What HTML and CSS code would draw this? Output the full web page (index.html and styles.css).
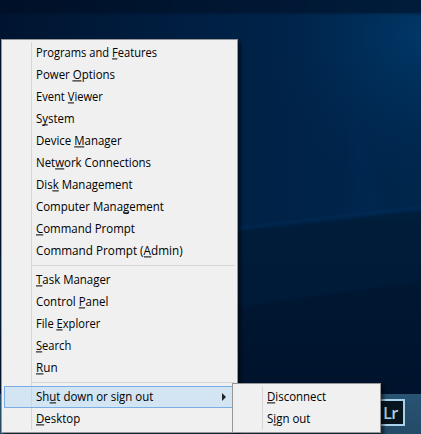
FILE: index.html
```html
<!DOCTYPE html>
<html lang="en">
<head>
<meta charset="utf-8">
<title>Desktop</title>
<link rel="stylesheet" href="styles.css">
</head>
<body>
<main class="desktop">
  <svg class="wallpaper" viewBox="0 0 421 434" aria-hidden="true">
    <defs>
      <linearGradient id="top" x1="0" x2="1" y1="0" y2="0"><stop offset="0" stop-color="#001027"/><stop offset=".6" stop-color="#001733"/><stop offset="1" stop-color="#001d3b"/></linearGradient>
      <linearGradient id="base" x1="0" x2="1" y1="0" y2="0"><stop offset="0" stop-color="#001430"/><stop offset=".55" stop-color="#002146"/><stop offset="1" stop-color="#00264c"/></linearGradient>
      <radialGradient id="glow" gradientUnits="userSpaceOnUse" cx="421" cy="35" r="165"><stop offset="0" stop-color="#003767"/><stop offset=".45" stop-color="#002e5a" stop-opacity=".7"/><stop offset="1" stop-color="#00264c" stop-opacity="0"/></radialGradient>
      <linearGradient id="low" x1="0" x2="0" y1="0" y2="1"><stop offset="0" stop-color="#001d3a"/><stop offset="1" stop-color="#001834"/></linearGradient>
      <linearGradient id="deep" x1="0" x2="0" y1="0" y2="1"><stop offset="0" stop-color="#001833"/><stop offset="1" stop-color="#00102a"/></linearGradient>
      <filter id="soft" color-interpolation-filters="sRGB"><feGaussianBlur stdDeviation=".8"/></filter>
      <filter id="softer" color-interpolation-filters="sRGB" x="-50%" y="-20%" width="200%" height="140%"><feGaussianBlur stdDeviation="5"/></filter>
    </defs>
    <rect width="421" height="434" fill="url(#base)"/>
    <rect y="13" width="421" height="210" fill="url(#glow)"/>
    <path d="M350 115L360 120L387 214L350 218Z" fill="#002c5a" opacity=".3" filter="url(#softer)"/>
    <path d="M230 229L421 207" stroke="#002d59" stroke-width="3" opacity=".5" filter="url(#soft)"/>
    <path d="M-5 -5H430V13.500H-5Z" fill="url(#top)" filter="url(#soft)"/>
    <path d="M-5 258L430 210V440H-5Z" fill="url(#low)" filter="url(#soft)"/>
    <path d="M-5 334L240 307L430 280V440H-5Z" fill="url(#deep)" filter="url(#soft)"/>
  </svg>
  <div class="taskbar"></div>
  <div class="lightroom">Lr</div>
  <nav class="menu main-menu">
    <div class="item narrow"><span>Programs and <u>F</u>eatures</span></div>
    <div class="item"><span>Power <u>O</u>ptions</span></div>
    <div class="item narrow"><span>Event <u>V</u>iewer</span></div>
    <div class="item"><span>S<u>y</u>stem</span></div>
    <div class="item"><span>Device <u>M</u>anager</span></div>
    <div class="item"><span>Net<u>w</u>ork Connections</span></div>
    <div class="item"><span>Dis<u>k</u> Management</span></div>
    <div class="item"><span>Computer Mana<u>g</u>ement</span></div>
    <div class="item"><span><u>C</u>ommand Prompt</span></div>
    <div class="item wide"><span>Command Prompt (<u>A</u>dmin)</span></div>
    <div class="separator"></div>
    <div class="item"><span><u>T</u>ask Manager</span></div>
    <div class="item"><span>Control <u>P</u>anel</span></div>
    <div class="item narrow"><span>File <u>E</u>xplorer</span></div>
    <div class="item narrow"><span><u>S</u>earch</span></div>
    <div class="item wide"><span><u>R</u>un</span></div>
    <div class="separator"></div>
    <div class="item selected"><span>Sh<u>u</u>t down or sign out</span><svg class="arrow" width="4" height="8" viewBox="0 0 4 8"><path d="M0 0L4 4L0 8Z"/></svg></div>
    <div class="item"><span><u>D</u>esktop</span></div>
  </nav>
  <nav class="menu submenu">
    <div class="item"><span><u>D</u>isconnect</span></div>
    <div class="item"><span>S<u>i</u>gn out</span></div>
  </nav>
</main>
</body>
</html>
```
FILE: styles.css
```css
* { box-sizing: border-box; }
body { margin: 0; overflow: hidden; }
.desktop { position: relative; width: 421px; height: 434px; overflow: hidden; background: #001b3a; }
.wallpaper { display: block; width: 421px; height: 434px; }
.taskbar { position: absolute; left: 0; right: 0; bottom: 0; height: 40px; background: linear-gradient(#285373, #244b68); }
.lightroom {
  position: absolute; left: 378px; top: 399px; width: 27px; height: 27px;
  border: 2px solid #a9d1ea; background: #07151f; color: #a9d1ea;
  font: 600 16.5px/24px "Open Sans", sans-serif; padding-left: 3px; letter-spacing: -.8px;
}
.menu {
  position: absolute; padding: 2px; border: 1px solid #979797; background: #f0f0f0;
  box-shadow: 3px 3px 3px rgba(0, 0, 0, .5);
  font: 12.6px/22px "Open Sans", "Noto Sans", sans-serif; color: #000;
}
.menu::before {
  content: ""; position: absolute; left: 29px; top: 2px; bottom: 2px; width: 1px;
  background: #d7d7d7;
}
.main-menu { left: 1px; top: 39px; width: 237px; height: 394px; }
.submenu { left: 232px; top: 383px; width: 149px; height: 50px; }
.item { position: relative; display: flex; align-items: center; justify-content: space-between; height: 22px; padding: 0 9px 0 32px; white-space: nowrap; }
.item span { transform: translateY(.4px) scaleX(.91); transform-origin: 0 50%; }
.narrow span { transform: translateY(.4px) scaleX(.885); }
.wide span { transform: translateY(.4px) scaleX(.93); }
.item u { text-decoration: none; background: linear-gradient(#000, #000) 0 14px / 100% 1px no-repeat; }
.separator { height: 7px; margin-left: 28px; background: linear-gradient(#d7d7d7, #d7d7d7) 0 3px / 100% 1px no-repeat; }
.selected::before {
  content: ""; position: absolute; inset: 0; border: 1px solid #78aee5;
  background: rgba(174, 215, 247, .43);
}
.selected span, .arrow { position: relative; }
.arrow { fill: #222; }
```
